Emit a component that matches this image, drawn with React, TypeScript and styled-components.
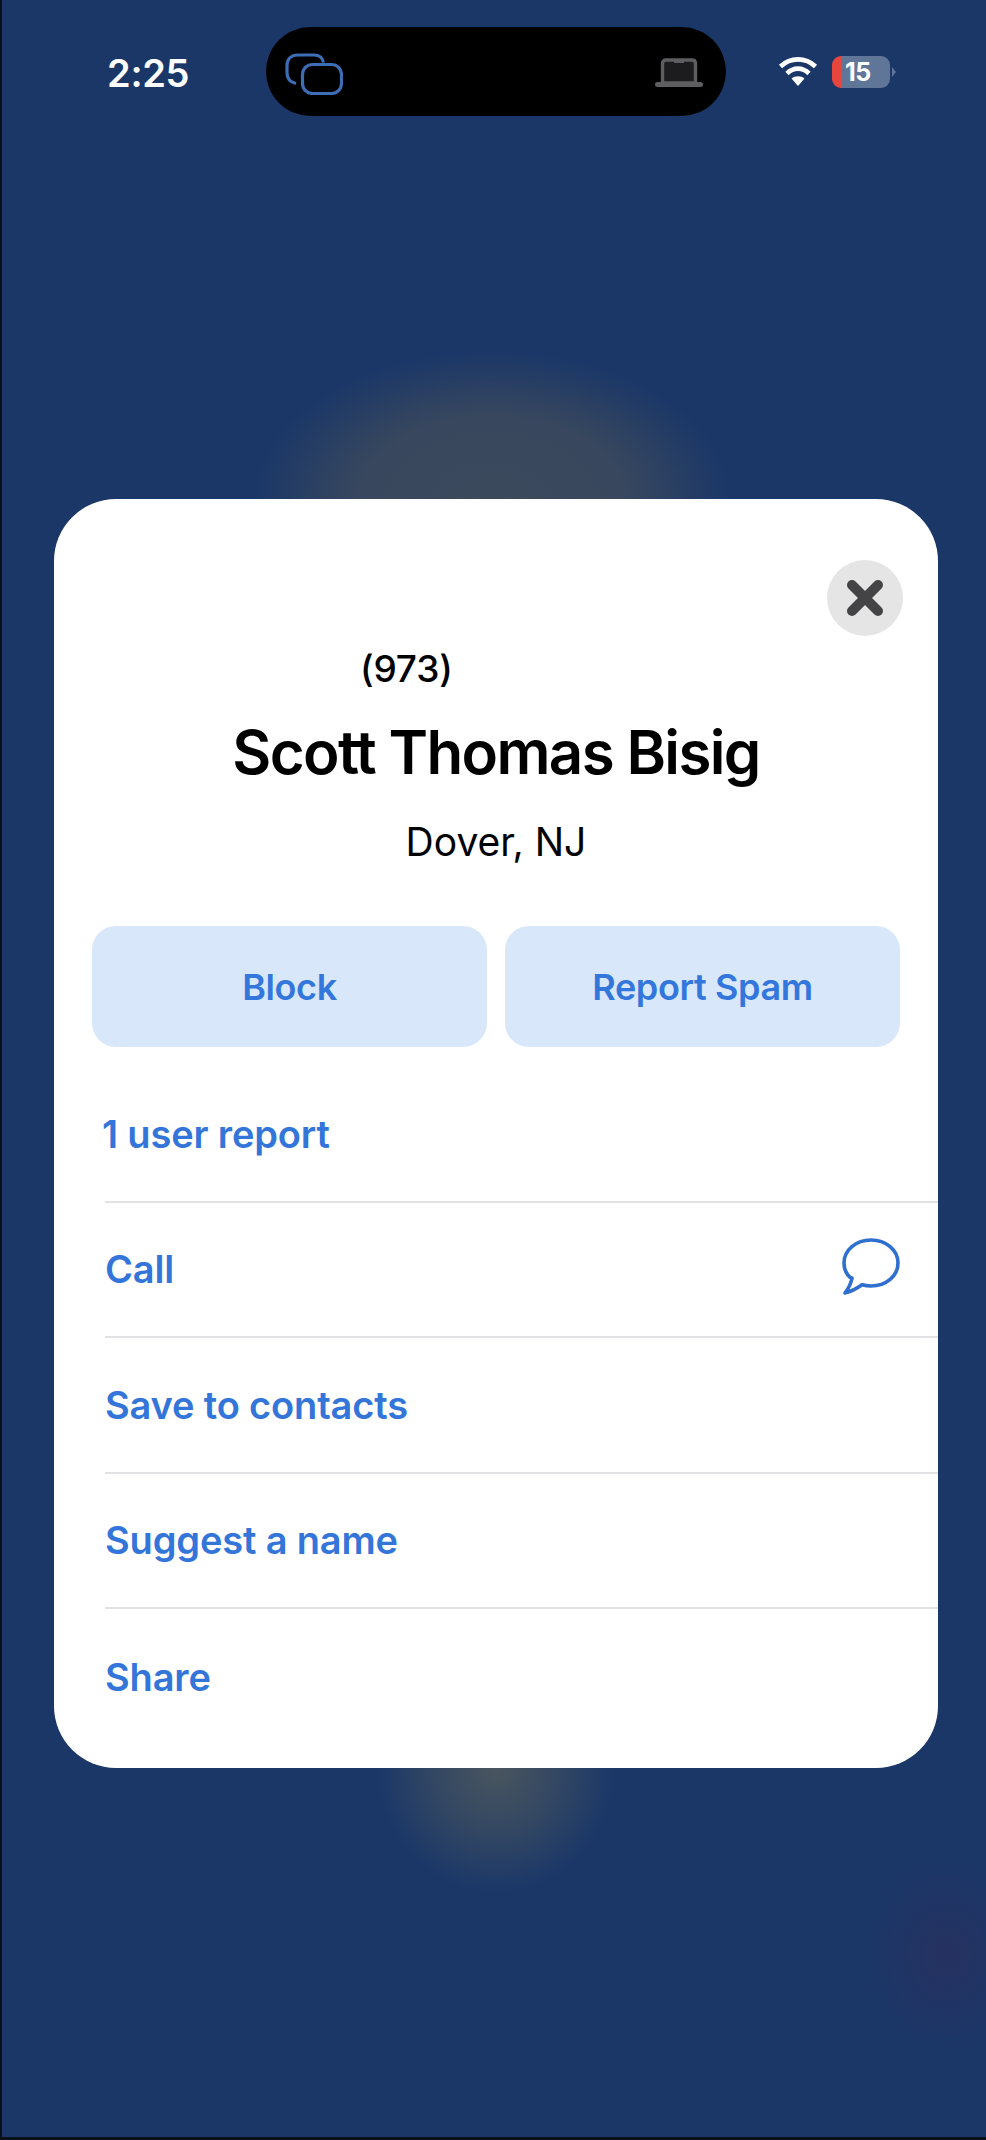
import React from "react";
import styled, { createGlobalStyle } from "styled-components";

const Global = createGlobalStyle`
  html, body { margin: 0; padding: 0; background: #000; }
  body { font-family: Inter, "Liberation Sans", sans-serif; }
`;

const Page = styled.div`
  box-sizing: border-box;
  width: 986px;
  height: 2140px;
  border-left: 2px solid #0a0f1c;
  border-bottom: 3px solid #0a0f1c;
  display: flex;
  flex-direction: column;
  overflow: hidden;
  background:
    radial-gradient(ellipse 240px 150px at 490px 500px, rgba(110, 100, 75, 0.4) 0%, rgba(110, 100, 75, 0.36) 55%, rgba(110, 100, 75, 0) 100%),
    radial-gradient(ellipse 120px 125px at 494px 1768px, rgba(120, 115, 85, 0.5) 0%, rgba(120, 115, 85, 0.28) 50%, rgba(120, 115, 85, 0) 100%),
    radial-gradient(ellipse 85px 100px at 945px 1955px, rgba(80, 30, 70, 0.22) 0%, rgba(80, 30, 70, 0) 100%),
    #1a3768;
`;

const StatusBar = styled.header`
  display: flex;
  align-items: flex-start;
  height: 499px;
  padding-top: 27px;
  box-sizing: border-box;
`;

const Time = styled.div`
  width: 80px;
  margin: 24px 0 0 105px;
  color: #fff;
  font-size: 38px;
  line-height: 44px;
  font-weight: 600;
  letter-spacing: -0.3px;
`;

const Island = styled.div`
  width: 460px;
  height: 89px;
  margin-left: 79px;
  background: #000;
  border-radius: 45px;
  display: flex;
  align-items: flex-start;
  justify-content: space-between;
  padding: 26px 23px 0 19px;
  box-sizing: border-box;
`;

const LaptopIcon = styled.svg`
  margin-top: 5px;
`;

const Indicators = styled.div`
  display: flex;
  align-items: flex-start;
  margin: 29px 0 0 52px;
`;

const Battery = styled.div`
  width: 58px;
  height: 32px;
  margin-left: 14px;
  border-radius: 9px;
  overflow: hidden;
  background: linear-gradient(90deg, #e8453c 0 10px, #5f7699 10px);
  color: #fff;
  font-size: 25px;
  line-height: 32px;
  font-weight: 700;
  letter-spacing: -0.5px;
  padding-left: 13px;
  box-sizing: border-box;
`;

const BatteryCap = styled.div`
  width: 0;
  height: 0;
  margin: 11px 0 0 2px;
  border-top: 5px solid transparent;
  border-bottom: 5px solid transparent;
  border-left: 4px solid #5f7699;
`;

const Card = styled.main`
  width: 884px;
  height: 1269px;
  margin-left: 52px;
  background: #fff;
  border-radius: 62px;
  overflow: hidden;
  display: flex;
  flex-direction: column;
`;

const CloseRow = styled.div`
  display: flex;
  justify-content: flex-end;
  padding: 61px 35px 0 0;
`;

const CloseButton = styled.button`
  width: 76px;
  height: 76px;
  padding: 0;
  border: none;
  border-radius: 50%;
  background: #e5e5e6;
  display: flex;
  align-items: center;
  justify-content: center;
`;

const Number = styled.div`
  margin: 14px 0 0 306px;
  color: #000;
  font-size: 37px;
  line-height: 38px;
  font-weight: 500;
  letter-spacing: -0.2px;
`;

const Name = styled.h1`
  margin: 28px 0 0;
  text-align: center;
  color: #000;
  font-size: 60px;
  line-height: 72px;
  font-weight: 600;
  letter-spacing: -1.65px;
`;

const Location = styled.div`
  margin: 30px 0 0;
  text-align: center;
  color: #000;
  font-size: 39px;
  line-height: 48px;
  font-weight: 400;
`;

const Actions = styled.div`
  display: grid;
  grid-template-columns: 395px 395px;
  gap: 18px;
  margin: 60px 0 0 38px;
`;

const ActionButton = styled.button`
  height: 121px;
  border: none;
  border-radius: 24px;
  background: #d9e7fb;
  color: #3477dc;
  font-family: inherit;
  font-size: 36px;
  font-weight: 600;
  letter-spacing: -0.4px;
`;

const List = styled.div`
  display: flex;
  flex-direction: column;
  margin-top: 20px;
  padding-left: 51px;
`;

const Row = styled.div<{ $last?: boolean }>`
  height: 135.5px;
  box-sizing: border-box;
  display: flex;
  align-items: center;
  justify-content: space-between;
  padding-right: 38px;
  border-bottom: ${(p) => (p.$last ? "none" : "2.5px solid #e2e2e4")};
  color: #3375d9;
  font-size: 38px;
  font-weight: 600;
  letter-spacing: -0.15px;
`;

const FirstLabel = styled.span`
  margin-left: -3px;
`;

const ChatIcon = styled.svg`
  margin-bottom: 5px;
`;

export default function App() {
  return (
    <Page>
      <Global />
      <StatusBar>
        <Time>2:25</Time>
        <Island>
          <svg width="58" height="42" viewBox="0 0 58 42" fill="none" stroke="#3c6db5" strokeWidth="3.2">
            <path d="M38.5 9.5C37.5 4.5 34.5 2 29 2H13C6 2 2 6 2 13v7c0 5 2.5 9 9 10.5" />
            <rect x="17.5" y="11.5" width="39" height="29" rx="10" />
          </svg>
          <LaptopIcon width="48" height="30" viewBox="0 0 48 30">
            <path d="M7.5 25V5.5q0-3.5 3.5-3.5h26q3.5 0 3.5 3.5V25z" fill="#1c1c1e" stroke="#5e5e60" strokeWidth="3.4" />
            <rect x="0" y="24" width="48" height="5" rx="2.5" fill="#5e5e60" />
            <rect x="19" y="2" width="10" height="3" fill="#5e5e60" />
          </LaptopIcon>
        </Island>
        <Indicators>
          <svg width="40" height="30" viewBox="0 0 40 30" fill="none" stroke="#fff" strokeWidth="4.6">
            <path d="M2.5 10.5C12.5 1 27.5 1 37.5 10.5" />
            <path d="M9 17.5C15.5 11 24.5 11 31 17.5" />
            <path d="M20 30l-6.5-7.5c3.5-3 9.5-3 13 0z" fill="#fff" stroke="none" />
          </svg>
          <Battery>15</Battery>
          <BatteryCap />
        </Indicators>
      </StatusBar>
      <Card>
        <CloseRow>
          <CloseButton aria-label="Close">
            <svg width="38" height="38" viewBox="0 0 38 38" stroke="#444446" strokeWidth="10" strokeLinecap="round">
              <path d="M6 6l26 26M32 6L6 32" />
            </svg>
          </CloseButton>
        </CloseRow>
        <Number>(973)</Number>
        <Name>Scott Thomas Bisig</Name>
        <Location>Dover, NJ</Location>
        <Actions>
          <ActionButton>Block</ActionButton>
          <ActionButton>Report Spam</ActionButton>
        </Actions>
        <List>
          <Row><FirstLabel>1 user report</FirstLabel></Row>
          <Row>
            <span>Call</span>
            <ChatIcon width="58" height="58" viewBox="0 0 58 58" fill="none" stroke="#2f6fd0" strokeWidth="3.6" strokeLinejoin="round">
              <path d="M10 41C4.5 37 2 31.5 2 25 2 12 14 2 29 2s27 10 27 23-12 23-27 23c-3 0-6-.4-9-1.2-5 3.6-11 6.8-17 8.2 3-4 6-9 7-15z" />
            </ChatIcon>
          </Row>
          <Row>Save to contacts</Row>
          <Row>Suggest a name</Row>
          <Row $last>Share</Row>
        </List>
      </Card>
    </Page>
  );
}
